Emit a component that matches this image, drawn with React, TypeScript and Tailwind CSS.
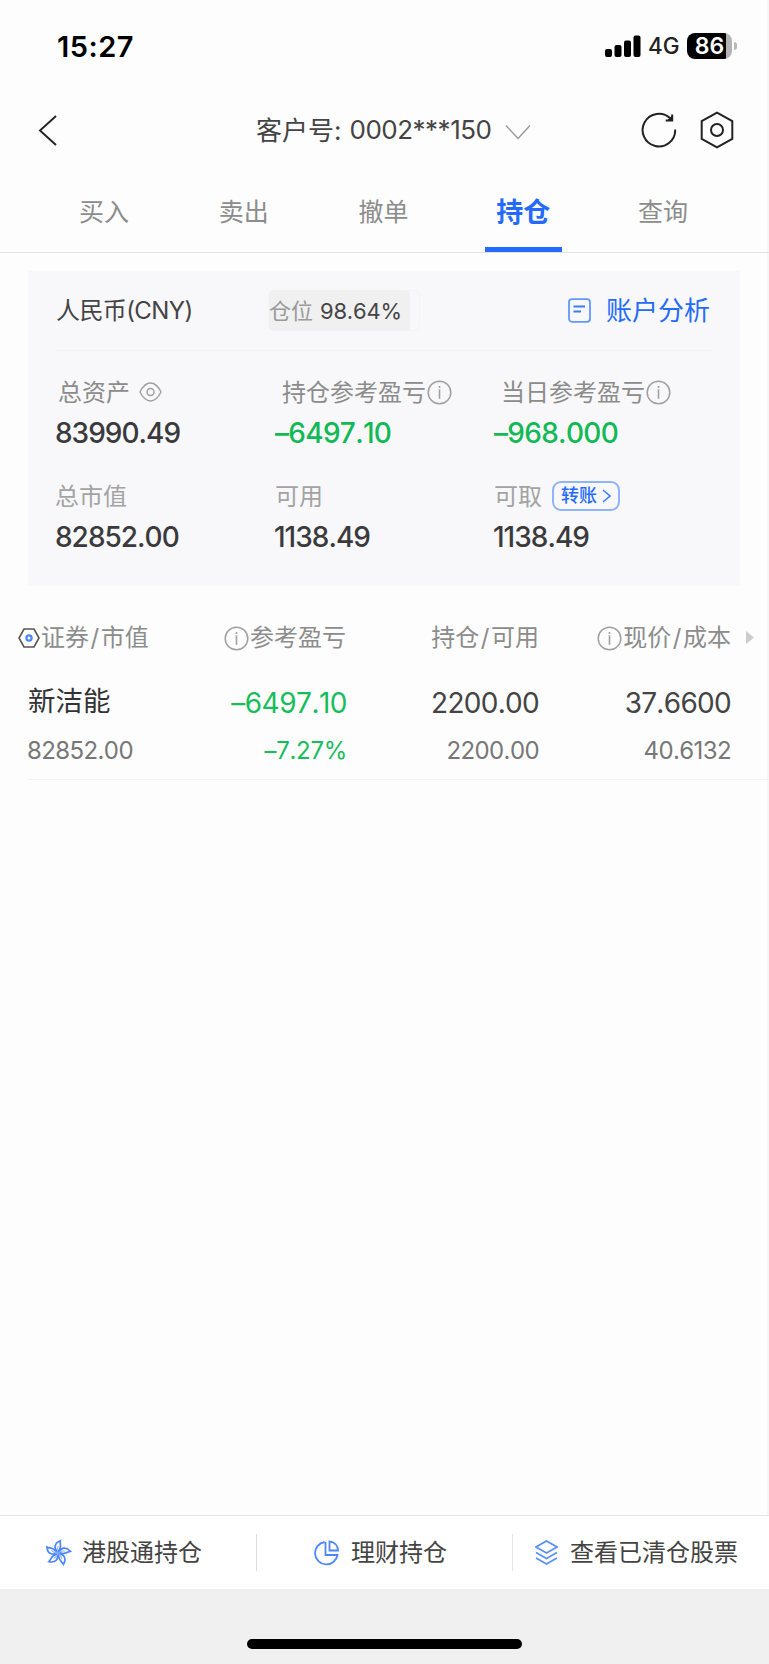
import type { ReactNode } from "react";

const tabs = ["买入", "卖出", "撤单", "持仓", "查询"];

function InfoIcon() {
  return (
    <svg width="25" height="25" viewBox="0 0 25 25" fill="none" stroke="#a0a0a0" className="shrink-0">
      <circle cx="12.5" cy="12.5" r="11.3" strokeWidth="1.5" />
      <path d="M12.5 9.3v9.5" strokeWidth="1.6" />
      <path d="M12.5 6v2" strokeWidth="1.6" />
    </svg>
  );
}

function Slash() {
  return <span className="px-[1.5px]">/</span>;
}

function StatusBar() {
  return (
    <div className="flex h-[92px] items-center justify-between pl-[57px] pr-[32px]">
      <span className="text-[29px] font-semibold leading-none tracking-[0.5px] text-black">15:27</span>
      <div className="flex items-center">
        <svg width="36" height="23" viewBox="0 0 36 23" fill="#000">
          <rect x="0" y="14" width="7" height="8" rx="2" />
          <rect x="9.5" y="10" width="7" height="12" rx="2" />
          <rect x="19" y="5.5" width="7" height="16.5" rx="2" />
          <rect x="28.5" y="0.5" width="7" height="21.5" rx="2" />
        </svg>
        <span className="ml-[7px] w-[39px] pt-px text-[22.5px] font-medium leading-none text-[#222]">4G</span>
        <div className="flex h-[26px] w-[45px] items-center justify-center overflow-hidden rounded-[8px] bg-linear-to-r from-black from-86% to-[#b3b3b3] to-86%">
          <span className="text-[23px] font-semibold leading-none text-white">86</span>
        </div>
        <div className="ml-[2px] h-[8px] w-[3px] rounded-r-full bg-[#b8b8b8]" />
      </div>
    </div>
  );
}

function Header() {
  return (
    <div className="flex h-[76px] items-center pl-[38px] pr-[35px]">
      <svg width="19" height="31" viewBox="0 0 19 31" fill="none" stroke="#222" strokeWidth="1.9">
        <path d="M18 1L2 15.5L18 30" />
      </svg>
      <div className="ml-[199px] flex items-center whitespace-nowrap text-[26px] leading-none text-[#444]">
        <span className="pt-px">客户号:</span>
        <span className="ml-[8px] tracking-[-0.5px]">0002***150</span>
        <svg width="26" height="16" viewBox="0 0 26 16" fill="none" stroke="#999" strokeWidth="1.4" className="ml-[14px] mt-[3px]">
          <path d="M1 1.5L13 14.5L25 1.5" />
        </svg>
      </div>
      <div className="ml-auto flex items-center gap-[23px]">
        <svg width="36" height="36" viewBox="0 0 36 36" fill="none" stroke="#222" strokeWidth="2">
          <path d="M34.2 17.5A16.3 16.3 0 1 1 29.3 6.4" />
          <path d="M31.2 2.5V8.6H24.7" />
          <path d="M31 3.5V8.5H26Z" fill="#222" stroke="none" />
        </svg>
        <svg width="34" height="38" viewBox="0 0 34 38" fill="none" stroke="#222" strokeWidth="2">
          <path d="M17 1.7L32.3 10.2V27.8L17 36.3L1.7 27.8V10.2Z" />
          <circle cx="17" cy="19" r="6" />
        </svg>
      </div>
    </div>
  );
}

function Tabs() {
  return (
    <div className="flex h-[85px] border-b border-[#e2e2e2] pl-[34px] pr-[36px]">
      {tabs.map((tab) => {
        const active = tab === "持仓";
        return (
          <div key={tab} className="flex flex-1 flex-col items-center">
            <span
              className={
                active
                  ? "flex h-[79px] items-center pt-[12px] text-[27px] font-bold text-[#246bfd]"
                  : "flex h-[79px] items-center pt-[11px] text-[25px] text-[#8c8c8c]"
              }
            >
              {tab}
            </span>
            {active && <div className="h-[5px] w-[77px] bg-[#246bfd]" />}
          </div>
        );
      })}
    </div>
  );
}

interface StatProps {
  label: ReactNode;
  value: string;
  green?: boolean;
}

function Stat({ label, value, green }: StatProps) {
  return (
    <div className="whitespace-nowrap">
      <div className="flex h-[32px] items-center pt-px text-[24px] leading-none">{label}</div>
      <div
        className={
          green
            ? "mt-[5px] flex h-[40px] items-center pl-px text-[28px] font-medium tracking-[-0.7px] text-[#12b955]"
            : "mt-[5px] flex h-[40px] items-center text-[28px] font-medium tracking-[-1px] text-[#3a3a3c]"
        }
      >
        {value}
      </div>
    </div>
  );
}

function AccountCard() {
  return (
    <div className="ml-[28px] mt-[18px] h-[315px] w-[712px] bg-[#f8f8fb] px-[27px]">
      <div className="flex h-[80px] items-center whitespace-nowrap border-b border-[#f2f2f4] leading-none">
        <span className="w-[213px] pl-px text-[24px] tracking-[-0.6px] text-[#444]">人民币(CNY)</span>
        <div className="flex h-[41px] w-[152px] rounded-[6px] border border-[#f4f4f6]">
          <div className="-my-px flex w-[141px] items-center rounded-[5px] bg-[#f0f0f1] text-[22px]">
            <span className="text-[22px] text-[#999]">仓位</span>
            <span className="ml-[7px] tracking-[-0.2px] text-[#444]">98.64%</span>
          </div>
        </div>
        <svg width="23" height="25" viewBox="0 0 23 25" fill="none" stroke="#3b7bfd" strokeWidth="1.8" className="ml-[148px]">
          <rect x="1" y="1.2" width="21" height="22.6" rx="3" stroke="#6397fd" />
          <path d="M5.5 8.5H17M5.5 13.5H13" />
        </svg>
        <span className="ml-[15px] text-[26px] text-[#246bfd]">账户分析</span>
      </div>
      <div className="mt-[25px] grid grid-cols-[219px_219px_1fr] gap-y-[27px]">
        <Stat
          label={
            <span className="flex items-center pl-[3px] text-[#8c8c8c]">
              总资产
              <svg width="23" height="20" viewBox="0 0 23 20" fill="none" stroke="#a0a0a0" strokeWidth="1.5" className="-mt-px ml-[9px]">
                <path d="M1 10C4 4 7.5 1 11.5 1S19 4 22 10C19 16 15.5 19 11.5 19S4 16 1 10Z" />
                <circle cx="11.5" cy="10" r="3.5" />
              </svg>
            </span>
          }
          value="83990.49"
        />
        <Stat
          label={<span className="flex items-center gap-px pl-[8px] text-[#8c8c8c]">持仓参考盈亏<InfoIcon /></span>}
          value="–6497.10"
          green
        />
        <Stat
          label={<span className="flex items-center gap-px pl-[8px] text-[#8c8c8c]">当日参考盈亏<InfoIcon /></span>}
          value="–968.000"
          green
        />
        <Stat label={<span className="text-[#a3a3a3]">总市值</span>} value="82852.00" />
        <Stat label={<span className="pl-px text-[#a3a3a3]">可用</span>} value="1138.49" />
        <Stat
          label={
            <>
              <span className="pl-px text-[#a3a3a3]">可取</span>
              <button className="-mt-[2px] ml-[10px] flex h-[30px] w-[68px] items-center justify-center rounded-[9px] border-2 border-[#8fb4fc] text-[18px] font-medium leading-none text-[#246bfd]">
                转账
                <svg width="9" height="14" viewBox="0 0 9 14" fill="none" stroke="#3b7bfd" strokeWidth="1.6" className="ml-[5px]">
                  <path d="M1 1L8 7L1 13" />
                </svg>
              </button>
            </>
          }
          value="1138.49"
        />
      </div>
    </div>
  );
}

function Holdings() {
  return (
    <div className="whitespace-nowrap">
      <div className="mt-[32px] grid h-[40px] grid-cols-[154px_192px_193px_192px_38px] items-center text-[24px] leading-none text-[#8c8c8c]">
        <div className="flex items-center pl-[18px]">
          <svg width="22" height="20" viewBox="0 0 22 20" fill="none">
            <path d="M6 1H16L21 10L16 19H6L1 10Z" stroke="#555" strokeWidth="1.6" />
            <circle cx="11" cy="10" r="2.6" stroke="#4b86fd" strokeWidth="2.2" />
          </svg>
          <span className="ml-px">证券<Slash />市值</span>
        </div>
        <div className="flex items-center justify-end">
          <InfoIcon />
          <span className="ml-px">参考盈亏</span>
        </div>
        <div className="text-right">持仓<Slash />可用</div>
        <div className="flex items-center justify-end">
          <InfoIcon />
          <span className="ml-px">现价<Slash />成本</span>
        </div>
        <svg width="8" height="13" viewBox="0 0 8 13" fill="#ccc" className="-mt-px ml-[15px]">
          <path d="M0 0L8 6.5L0 13Z" />
        </svg>
      </div>
      <div className="ml-[28px] h-[122px] border-b border-[#f2f2f2]">
        <div className="-ml-[28px] grid grid-cols-[154px_193px_192px_192px] pt-[22px] text-[28px] tracking-[-0.7px] text-[#444]">
          <span className="flex h-[44px] items-center pl-[28px] text-[27.5px] tracking-normal text-[#333]">新洁能</span>
          <span className="flex h-[44px] items-center justify-end pt-[2px] tracking-[-0.5px] text-[#18bd5b]">–6497.10</span>
          <span className="flex h-[44px] items-center justify-end pt-[2px]">2200.00</span>
          <span className="flex h-[44px] items-center justify-end pt-[2px]">37.6600</span>
        </div>
        <div className="-ml-[28px] mt-[7px] grid h-[40px] grid-cols-[154px_193px_192px_192px] items-center text-[24px] leading-none tracking-[-0.6px] text-[#777]">
          <span className="pl-[27px]">82852.00</span>
          <span className="text-right tracking-[-0.3px] text-[#18bd5b]">–7.27%</span>
          <span className="text-right">2200.00</span>
          <span className="text-right">40.6132</span>
        </div>
      </div>
    </div>
  );
}

function BottomBar() {
  return (
    <div className="flex h-[74px] items-center whitespace-nowrap border-t border-[#e6e6e6] bg-white text-[24px] leading-none text-[#444]">
      <div className="flex h-[37px] w-[257px] items-center border-r border-[#dcdcdc] pl-[44px]">
        <svg width="28" height="28" viewBox="0 0 28 28" fill="none" stroke="#4b86fd" strokeWidth="1.7">
          {[8, 80, 152, 224, 296].map((angle) => (
            <g key={angle} transform={`rotate(${angle} 14 14)`}>
              <path d="M13.5 13C9.5 10.500 8.500 5 14.500 1.500C14.200 4.500 18 8 13.500 13Z" />
              <path d="M14 14C12.500 11 12.500 9 13.500 7" stroke="#8fb4fc" strokeWidth="1" />
            </g>
          ))}
        </svg>
        <span className="ml-[10px] pt-px">港股通持仓</span>
      </div>
      <div className="flex h-[37px] w-[256px] items-center border-r border-[#e4e4e4] pl-[57px]">
        <svg width="25" height="26" viewBox="0 0 25 26" fill="none" stroke="#4b86fd" strokeWidth="1.8">
          <path d="M10.5 2A11.3 11.3 0 1 0 23.5 15H11.5V2" />
          <path d="M15.5 1.5V10.5H24C24 5.5 20.5 2 15.5 1.5Z" />
        </svg>
        <span className="ml-[12px] pt-px">理财持仓</span>
      </div>
      <div className="flex h-[37px] items-center pl-[22px]">
        <svg width="23" height="26" viewBox="0 0 23 26" fill="none" stroke="#5a90fd" strokeWidth="1.8">
          <path d="M11.5 1L22 7L11.5 13L1 7Z" />
          <path d="M1 12.5L11.5 18.5L22 12.5" />
          <path d="M1 18L11.5 24L22 18" />
        </svg>
        <span className="ml-[12px] pt-px">查看已清仓股票</span>
      </div>
    </div>
  );
}

export default function App() {
  return (
    <div className="flex h-[1664px] w-[769px] flex-col overflow-hidden bg-[#fdfdfd] font-['Inter','Noto_Sans_CJK_SC',sans-serif] [font-kerning:none]">
      <div className="flex flex-1 flex-col shadow-[inset_-2px_0_0_#f6f6f6]">
        <StatusBar />
        <Header />
        <Tabs />
        <AccountCard />
        <Holdings />
      </div>
      <BottomBar />
      <div className="flex h-[75px] items-end justify-center bg-[#f0f0f0] pb-[15px]">
        <div className="h-[10px] w-[275px] rounded-full bg-black" />
      </div>
    </div>
  );
}
